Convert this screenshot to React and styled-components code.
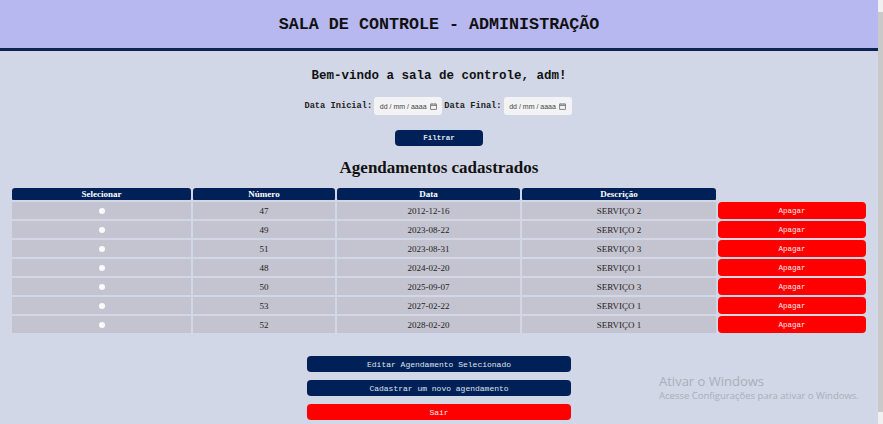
import React from 'react';
import styled, { createGlobalStyle } from 'styled-components';

const GlobalStyle = createGlobalStyle`
    html, body {
        margin: 0;
        padding: 0;
        height: 100%;
        overflow: hidden;
    }
    body {
        background: #d1d7e6;
        font-family: "Liberation Mono", "Courier New", monospace;
    }
`;

const agendamentos = [
    { id: 47, data: '2012-12-16', descricao: 'SERVIÇO 2' },
    { id: 49, data: '2023-08-22', descricao: 'SERVIÇO 2' },
    { id: 51, data: '2023-08-31', descricao: 'SERVIÇO 3' },
    { id: 48, data: '2024-02-20', descricao: 'SERVIÇO 1' },
    { id: 50, data: '2025-09-07', descricao: 'SERVIÇO 3' },
    { id: 53, data: '2027-02-22', descricao: 'SERVIÇO 1' },
    { id: 52, data: '2028-02-20', descricao: 'SERVIÇO 1' },
];

const Screen = styled.div`
    display: flex;
    height: 424px;
    width: 883px;
`;

const Page = styled.div`
    flex: 1;
    position: relative;
    display: flex;
    flex-direction: column;
    align-items: center;
`;

const ScrollTrack = styled.div`
    width: 5px;
    background: #c9c9c9;
    display: flex;
    flex-direction: column;
    justify-content: space-between;

    &::before, &::after {
        content: '';
        height: 12px;
        background: #f0f0f0;
    }
`;

const Header = styled.header`
    align-self: stretch;
    height: 48px;
    background: #b8b8f0;
    border-bottom: 3px solid #0e2352;
    display: flex;
    align-items: center;
    justify-content: center;

    h1 {
        margin: 0;
        font-size: 16.7px;
        font-weight: bold;
        color: #111;
    }
`;

const Welcome = styled.h2`
    margin: 18px 0 0;
    font-size: 12.5px;
    font-weight: bold;
    color: #111;
`;

const DateRow = styled.div`
    margin-top: 14px;
    display: flex;
    align-items: center;
    gap: 2px;
    padding-right: 2px;
`;

const Label = styled.label`
    font-size: 8.7px;
    font-weight: bold;
    color: #222;
`;

const FakeDate = styled.div`
    width: 68px;
    height: 18px;
    box-sizing: border-box;
    background: #f3f3f5;
    border-radius: 3px;
    display: flex;
    align-items: center;
    justify-content: center;
    gap: 3px;
    font-family: "Liberation Sans", Arial, sans-serif;
    font-size: 7px;
    color: #444;

    svg {
        width: 7px;
        height: 7px;
    }
`;

const Button = styled.button`
    border: none;
    border-radius: 4px;
    background: ${p => p.$danger ? '#ff0000' : '#002157'};
    color: ${p => p.$danger ? '#ffe8e8' : '#dfe3ee'};
    font-family: "Liberation Mono", "Courier New", monospace;
    font-size: ${p => p.$small ? '7.5px' : '8px'};
    font-weight: ${p => p.$bold ? 'bold' : 'normal'};
    width: ${p => p.$width || '264px'};
    height: ${p => p.$height || '16px'};
    padding: 0;
    cursor: pointer;
`;

const FilterButton = styled(Button)`
    margin-top: 15px;
`;

const Title = styled.h2`
    margin: 12px 0 0;
    font-family: "Liberation Serif", "Times New Roman", serif;
    font-size: 17px;
    font-weight: bold;
    color: #111;
`;

const Table = styled.table`
    margin-top: 8px;
    width: 858px;
    border-spacing: 2px;
    font-family: "Liberation Serif", "Times New Roman", serif;
    font-size: 9px;
    color: #222;
    table-layout: fixed;
`;

const Th = styled.th`
    background: ${p => p.$empty ? 'transparent' : '#002157'};
    color: #fff;
    font-weight: bold;
    height: 12px;
    padding: 0;
    border-radius: 3px 3px 1px 1px;
    text-align: center;
`;

const Td = styled.td`
    background: #c4c4d0;
    height: 17px;
    padding: 0;
    text-align: center;
`;

const ActionTd = styled.td`
    padding: 0;
    height: 17px;
`;

const Radio = styled.span`
    display: inline-block;
    width: 6px;
    height: 6px;
    border-radius: 50%;
    background: #fafafa;
    vertical-align: middle;
`;

const Actions = styled.div`
    margin-top: 21px;
    display: flex;
    flex-direction: column;
    gap: 8px;
`;

const Watermark = styled.div`
    position: absolute;
    left: 659px;
    top: 373px;
    font-family: "Open Sans", "Noto Sans", sans-serif;
    color: #a9aebb;

    p {
        margin: 0;
        font-size: 9.5px;
    }
    p:first-child {
        font-size: 13px;
        line-height: 16px;
    }
`;

const CalendarIcon = () => (
    <svg viewBox="0 0 10 10" fill="none" stroke="#555" strokeWidth="1">
        <rect x="1" y="1.5" width="8" height="7.5" />
        <line x1="1" y1="3.5" x2="9" y2="3.5" />
        <line x1="3" y1="0.5" x2="3" y2="2" />
        <line x1="7" y1="0.5" x2="7" y2="2" />
    </svg>
);

const DateField = () => (
    <FakeDate>
        <span>dd / mm / aaaa</span>
        <CalendarIcon />
    </FakeDate>
);

const App = () => (
    <Screen>
        <GlobalStyle />
        <Page>
            <Header>
                <h1>SALA DE CONTROLE - ADMINISTRAÇÃO</h1>
            </Header>
            <Welcome>Bem-vindo a sala de controle, adm!</Welcome>
            <DateRow>
                <Label>Data Inicial:</Label>
                <DateField />
                <Label>Data Final:</Label>
                <DateField />
            </DateRow>
            <FilterButton $width="88px" $small $bold>Filtrar</FilterButton>
            <Title>Agendamentos cadastrados</Title>
            <Table>
                <colgroup>
                    <col style={{ width: 179 }} />
                    <col style={{ width: 142 }} />
                    <col style={{ width: 183 }} />
                    <col style={{ width: 194 }} />
                    <col style={{ width: 148 }} />
                </colgroup>
                <thead>
                    <tr>
                        <Th>Selecionar</Th>
                        <Th>Número</Th>
                        <Th>Data</Th>
                        <Th>Descrição</Th>
                        <Th $empty />
                    </tr>
                </thead>
                <tbody>
                    {agendamentos.map(a => (
                        <tr key={a.id}>
                            <Td><Radio /></Td>
                            <Td>{a.id}</Td>
                            <Td>{a.data}</Td>
                            <Td>{a.descricao}</Td>
                            <ActionTd>
                                <Button $danger $small $width="148px" $height="17px">Apagar</Button>
                            </ActionTd>
                        </tr>
                    ))}
                </tbody>
            </Table>
            <Actions>
                <Button>Editar Agendamento Selecionado</Button>
                <Button>Cadastrar um novo agendamento</Button>
                <Button $danger>Sair</Button>
            </Actions>
            <Watermark>
                <p>Ativar o Windows</p>
                <p>Acesse Configurações para ativar o Windows.</p>
            </Watermark>
        </Page>
        <ScrollTrack />
    </Screen>
);

export default App;
